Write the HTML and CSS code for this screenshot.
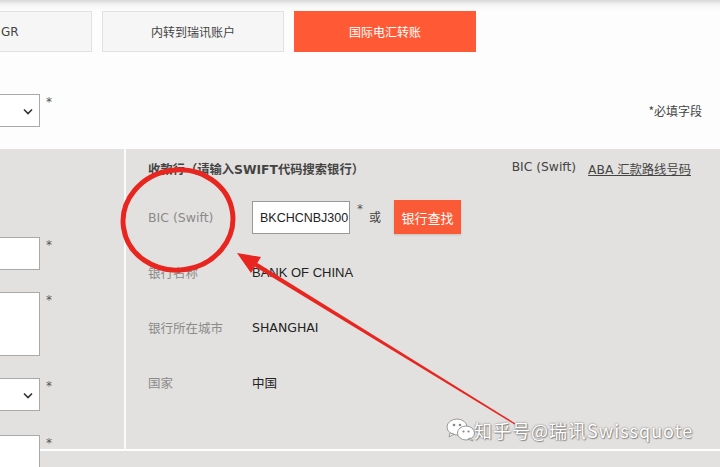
FILE: index.html
```html
<!DOCTYPE html>
<html lang="zh">
<head>
<meta charset="utf-8">
<link rel="stylesheet" href="styles.css">
</head>
<body>
<div class="page">
  <div class="shade"></div>
  <div class="tabs">
    <div class="tab tab-first">GR</div>
    <div class="tab">内转到瑞讯账户</div>
    <div class="tab tab-active">国际电汇转账</div>
  </div>
  <div class="form-top">
    <div class="field">
      <div class="box select"><svg class="chev" width="10" height="7" viewBox="0 0 10 7"><path d="M1 1.5 L5 5.5 L9 1.5" fill="none" stroke="#333" stroke-width="1.6"/></svg></div>
      <span class="req">*</span>
    </div>
    <div class="note">*必填字段</div>
  </div>
  <div class="section">
    <div class="left-col">
      <div class="field f1"><div class="box"></div><span class="req">*</span></div>
      <div class="field f2"><div class="box area"></div><span class="req">*</span></div>
      <div class="field f3"><div class="box select"><svg class="chev" width="10" height="7" viewBox="0 0 10 7"><path d="M1 1.5 L5 5.5 L9 1.5" fill="none" stroke="#333" stroke-width="1.6"/></svg></div><span class="req">*</span></div>
      <div class="field f4"><div class="box"></div><span class="req">*</span></div>
    </div>
    <div class="divider"></div>
    <div class="bank">
      <div class="bank-head">
        <div class="bank-title">收款行（请输入<span class="latin">SWIFT</span>代码搜索银行）</div>
        <div class="bank-switch"><span>BIC (Swift)</span><a class="aba">ABA 汇款路线号码</a></div>
      </div>
      <div class="row">
        <div class="label">BIC (Swift)</div>
        <div class="swift-input">BKCHCNBJ300</div>
        <span class="req req-in">*</span>
        <span class="or">或</span>
        <div class="btn">银行查找</div>
      </div>
      <div class="row">
        <div class="label">银行名称</div>
        <div class="value arial">BANK OF CHINA</div>
      </div>
      <div class="row">
        <div class="label">银行所在城市</div>
        <div class="value">SHANGHAI</div>
      </div>
      <div class="row">
        <div class="label">国家</div>
        <div class="value">中国</div>
      </div>
    </div>
  </div>
  <div class="section2"></div>

  <svg class="markup" width="720" height="467" viewBox="0 0 720 467">
    <ellipse cx="178" cy="220" rx="55" ry="50" fill="none" stroke="#e8251f" stroke-width="5" transform="rotate(-8 178 220)"/>
    <polygon points="515.4,423.4 257,262.7 254.6,266.5 514.6,424.6" fill="#e8251f"/>
    <polygon points="237,253 261,257 251,273" fill="#e8251f"/>
  </svg>

  <div class="watermark">
    <svg class="wechat" width="30" height="24" viewBox="0 0 30 24">
      <ellipse cx="11" cy="9" rx="10" ry="8" fill="#fff" stroke="#999" stroke-width="1"/>
      <path d="M4 15 L3 19 L8 16 Z" fill="#fff" stroke="#999" stroke-width="1"/>
      <circle cx="8" cy="7" r="1.3" fill="#888"/>
      <circle cx="14" cy="7" r="1.3" fill="#888"/>
      <ellipse cx="20" cy="15" rx="8.5" ry="7" fill="#fff" stroke="#999" stroke-width="1"/>
      <path d="M25 20 L27 23 L22 21 Z" fill="#fff" stroke="#999" stroke-width="1"/>
      <circle cx="17.5" cy="13.5" r="1.1" fill="#888"/>
      <circle cx="22.5" cy="13.5" r="1.1" fill="#888"/>
    </svg>
    <span class="wm-text">知乎号@瑞讯Swissquote</span>
  </div>
</div>
</body>
</html>
```

FILE: styles.css
```css
* { box-sizing: border-box; }
html, body { margin: 0; padding: 0; }
body {
  width: 720px;
  height: 467px;
  overflow: hidden;
  background: #fdfdfd;
  font-family: "DejaVu Sans", "Noto Sans CJK SC", sans-serif;
  font-size: 12px;
  color: #333;
}
.page { position: relative; width: 720px; height: 467px; overflow: hidden; }
.shade {
  height: 11px;
  background: linear-gradient(#d9d9d9, #f4f4f4 45%, #fdfdfd);
}
.tabs { display: flex; gap: 10px; margin-left: -90px; height: 41px; }
.tab {
  width: 182px;
  height: 41px;
  background: #f6f6f6;
  border: 1px solid #e1e1e1;
  display: flex;
  align-items: center;
  justify-content: center;
  font-family: "Noto Sans CJK SC", sans-serif;
  font-size: 12px;
  color: #444;
}
.tab-first { justify-content: flex-start; padding-left: 90px; font-family: "DejaVu Sans", sans-serif; }
.tab-active { background: #ff5a35; border-color: #ff5a35; color: #fff; }

.form-top { position: relative; height: 97px; padding-top: 42px; }
.field { display: flex; align-items: flex-start; margin-left: -12px; }
.box {
  width: 52px;
  height: 33px;
  background: #fff;
  border: 1px solid #a9a9a9;
  position: relative;
  flex: none;
}
.box.area { height: 64px; }
.chev { position: absolute; right: 6px; top: 13px; }
.req { margin-left: 6px; margin-top: 1px; color: #555; font-size: 12px; line-height: 14px; }
.note {
  position: absolute;
  right: 18px;
  top: 50px;
  font-family: "Noto Sans CJK SC", sans-serif;
  font-size: 12px;
  color: #444;
}

.section {
  display: grid;
  grid-template-columns: 124px 2px 1fr;
  grid-template-rows: 300px;
  height: 302px;
  background: #e3e1df;
  border-bottom: 2px solid #fff;
}
.left-col { padding-top: 88px; display: flex; flex-direction: column; min-height: 0; }
.left-col .f2 { margin-top: 22px; }
.left-col .f3 { margin-top: 22px; }
.left-col .f4 { margin-top: 24px; }
.left-col .f4 .box { height: 40px; }
.divider { background: #fbfbfb; }

.bank { padding: 0 29px 0 22px; }
.bank-head {
  height: 41px;
  display: flex;
  justify-content: space-between;
  align-items: center;
  padding-bottom: 1px;
}
.bank-title {
  font-family: "Noto Sans CJK SC", sans-serif;
  font-weight: bold;
  font-size: 12.3px;
  color: #444;
}
.bank-title .latin { font-family: "DejaVu Sans", sans-serif; font-weight: bold; }
.bank-switch { display: flex; gap: 12px; color: #444; font-size: 12.3px; }
.aba { text-decoration: underline; color: #444; }

.row { height: 55px; display: flex; align-items: center; }
.label { width: 104px; color: #8a8a8a; font-size: 12.5px; }
.value { color: #222; font-size: 12.5px; }
.arial { font-family: "Liberation Sans", "Noto Sans CJK SC", sans-serif; font-size: 13px; }
.swift-input {
  width: 98px;
  height: 33px;
  background: #fff;
  border: 1px solid #999;
  display: flex;
  align-items: center;
  padding-left: 7px;
  font-family: "Liberation Sans", sans-serif;
  font-size: 12.5px;
  color: #222;
}
.req-in { align-self: flex-start; margin-top: 12px; margin-left: 7px; }
.or { margin-left: 6px; font-family: "Noto Sans CJK SC", sans-serif; color: #444; margin-top: -2px; }
.btn {
  margin-left: 13px;
  width: 67px;
  height: 34px;
  background: #fb5a36;
  color: #fff;
  display: flex;
  align-items: center;
  justify-content: center;
  font-family: "Noto Sans CJK SC", sans-serif;
  font-size: 13px;
  box-shadow: 0 1px 2px rgba(0,0,0,.15);
  margin-top: -1px;
}
.section2 { height: 20px; background: #e3e1df; }

.markup { position: absolute; left: 0; top: 0; pointer-events: none; }
.watermark {
  position: absolute;
  left: 446px;
  top: 418px;
  display: flex;
  align-items: center;
}
.wm-text {
  font-family: "Noto Sans CJK SC", sans-serif;
  font-size: 18px;
  letter-spacing: 1px;
  color: #fff;
  text-shadow: 0 0 2px rgba(0,0,0,.55), 1px 1px 1px rgba(0,0,0,.3);
  margin-left: -2px;
  line-height: 24px;
}
```
